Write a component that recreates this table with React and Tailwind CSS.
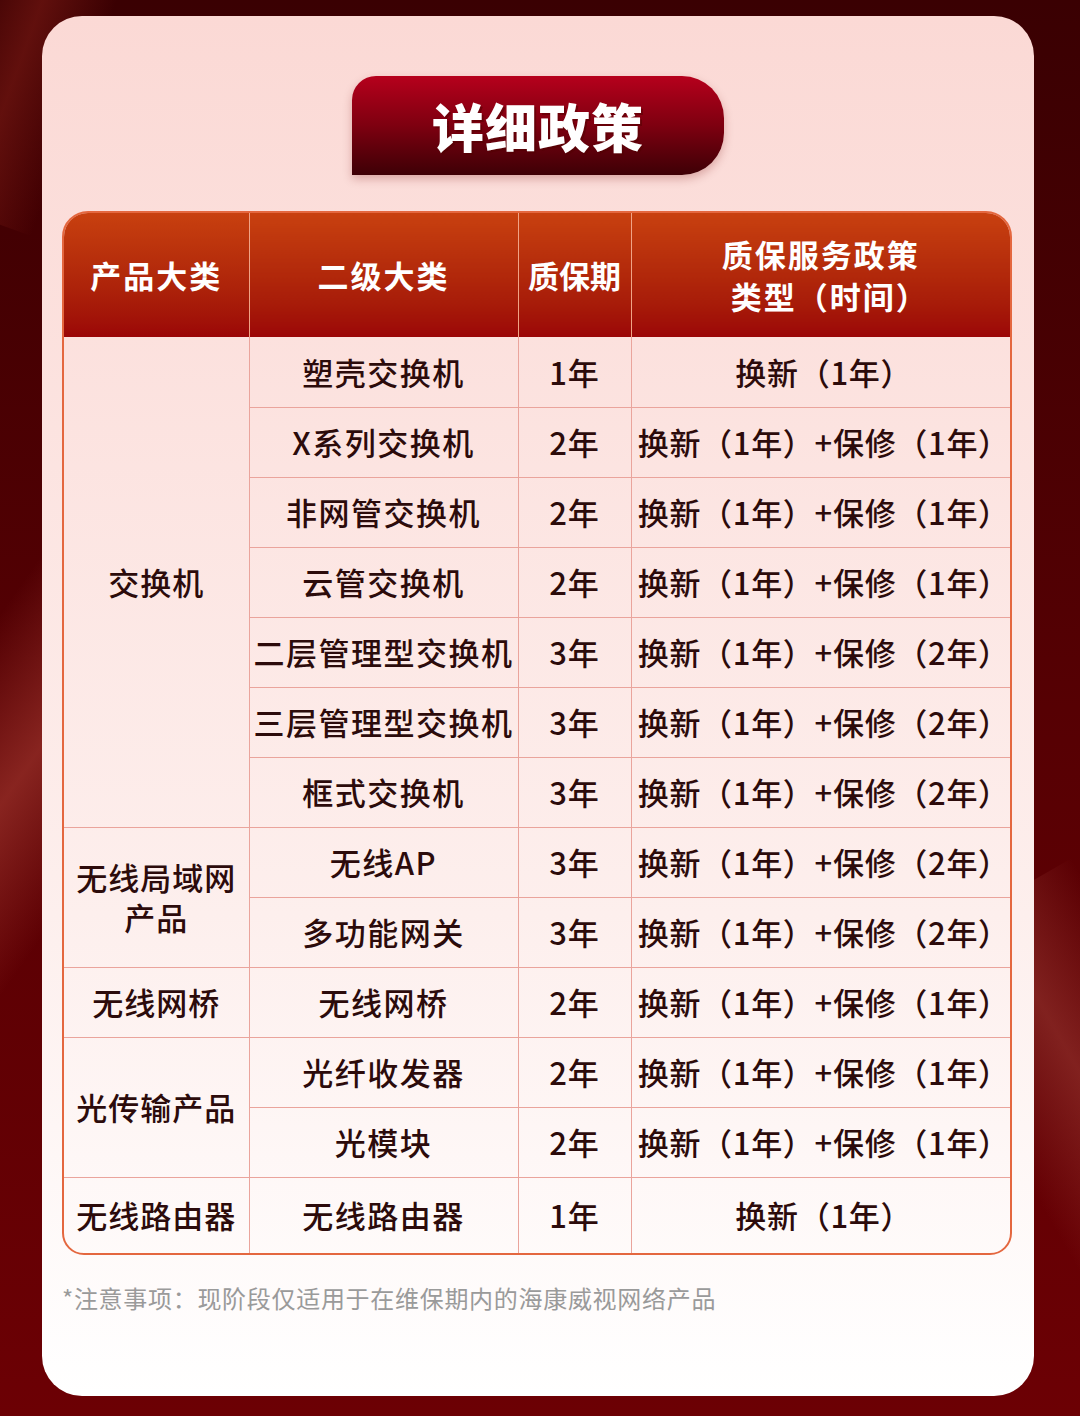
import React from "react";

const rows = [
  { cat: "交换机", span: 7, sub: "塑壳交换机", period: "1年", policy: "换新（1年）" },
  { sub: "X系列交换机", period: "2年", policy: "换新（1年）+保修（1年）" },
  { sub: "非网管交换机", period: "2年", policy: "换新（1年）+保修（1年）" },
  { sub: "云管交换机", period: "2年", policy: "换新（1年）+保修（1年）" },
  { sub: "二层管理型交换机", period: "3年", policy: "换新（1年）+保修（2年）" },
  { sub: "三层管理型交换机", period: "3年", policy: "换新（1年）+保修（2年）" },
  { sub: "框式交换机", period: "3年", policy: "换新（1年）+保修（2年）" },
  { cat: "无线局域网产品", span: 2, sub: "无线AP", period: "3年", policy: "换新（1年）+保修（2年）" },
  { sub: "多功能网关", period: "3年", policy: "换新（1年）+保修（2年）" },
  { cat: "无线网桥", span: 1, sub: "无线网桥", period: "2年", policy: "换新（1年）+保修（1年）" },
  { cat: "光传输产品", span: 2, sub: "光纤收发器", period: "2年", policy: "换新（1年）+保修（1年）" },
  { sub: "光模块", period: "2年", policy: "换新（1年）+保修（1年）" },
  { cat: "无线路由器", span: 1, sub: "无线路由器", period: "1年", policy: "换新（1年）" },
];

const App = () => {
  const font = { fontFamily: '"Noto Sans CJK SC", "Noto Sans", sans-serif' };
  const last = rows.length - 1;

  return (
    <div
      className="relative w-[1080px] h-[1416px] overflow-hidden bg-linear-to-b from-[#3a0002] via-[#560003] to-[#6c0004]"
      style={font}
    >
      {/* background streaks */}
      <div className="absolute left-[-120px] top-[560px] w-[220px] h-[520px] rotate-[35deg] bg-linear-to-r from-transparent via-[#b8483c]/50 to-transparent" />
      <div className="absolute right-[-110px] top-[880px] w-[200px] h-[420px] rotate-[-30deg] bg-linear-to-r from-transparent via-[#a2423a]/50 to-transparent" />
      <div className="absolute left-[-60px] top-[-40px] w-[140px] h-[260px] rotate-[20deg] bg-linear-to-r from-transparent via-[#7a1a14]/60 to-transparent" />

      <div className="relative ml-[42px] mt-[16px] w-[992px] h-[1380px] rounded-[40px] bg-linear-to-b from-[#fbd9d5] via-[#fdefed] via-65% to-white px-[20px] pt-[60px]">
        <div className="flex justify-center">
          <div className="w-[372px] h-[99px] flex items-center justify-center rounded-tl-[24px] rounded-tr-[42px] rounded-br-[42px] bg-linear-to-b from-[#b6001c] via-[#7e0010] to-[#3e0006] shadow-[0_4px_10px_rgba(120,0,0,0.25)]">
            <span className="text-white text-[52px] font-black tracking-[1px] leading-none [text-shadow:2px_2px_0_rgba(80,0,0,0.5)]">
              详细政策
            </span>
          </div>
        </div>

        <div className="mt-[36px] w-[950px] rounded-t-[26px] rounded-b-[22px] border-2 border-[#e4673f] overflow-hidden">
          <table className="w-full border-collapse table-fixed text-[#2c0b0b]">
            <colgroup>
              <col className="w-[185px]" />
              <col className="w-[269px]" />
              <col className="w-[113px]" />
              <col />
            </colgroup>
            <thead>
              <tr className="h-[124px] text-white text-[31px] font-bold leading-[42px] tracking-[2px]">
                <th className="bg-linear-to-b from-[#c8400f] to-[#9b0507] border-r border-[#f0a386]">产品大类</th>
                <th className="bg-linear-to-b from-[#c8400f] to-[#9b0507] border-r border-[#f0a386]">二级大类</th>
                <th className="bg-linear-to-b from-[#c8400f] to-[#9b0507] border-r border-[#f0a386] tracking-[0px]">质保期</th>
                <th className="bg-linear-to-b from-[#c8400f] to-[#9b0507]">
                  <div>质保服务政策</div>
                  <div className="pl-[18px]">类型（时间）</div>
                </th>
              </tr>
            </thead>
            <tbody className="text-[31px] font-medium leading-[40px] text-center">
              {rows.map((r, i) => (
                <tr key={i} className={i === last ? "h-[76px]" : "h-[70px]"}>
                  {r.cat && (
                    <td
                      rowSpan={r.span}
                      className={`px-[10px] tracking-[1px] border-r border-[#eaa49c] ${i + r.span - 1 === last ? "" : "border-b"}`}
                    >
                      {r.cat}
                    </td>
                  )}
                  <td className={`px-[2px] tracking-[1.5px] whitespace-nowrap border-r border-[#eaa49c] ${i === last ? "" : "border-b"}`}>
                    {r.sub}
                  </td>
                  <td className={`tracking-[1px] border-r border-[#eaa49c] ${i === last ? "" : "border-b"}`}>{r.period}</td>
                  <td className={`pl-[6px] tracking-[0.7px] whitespace-nowrap border-[#eaa49c] ${i === last ? "" : "border-b"}`}>{r.policy}</td>
                </tr>
              ))}
            </tbody>
          </table>
        </div>

        <p className="mt-[27px] text-[24px] tracking-[0.7px] text-[#9a9a9a] leading-[32px]">
          *注意事项：现阶段仅适用于在维保期内的海康威视网络产品
        </p>
      </div>
    </div>
  );
};

export default App;
